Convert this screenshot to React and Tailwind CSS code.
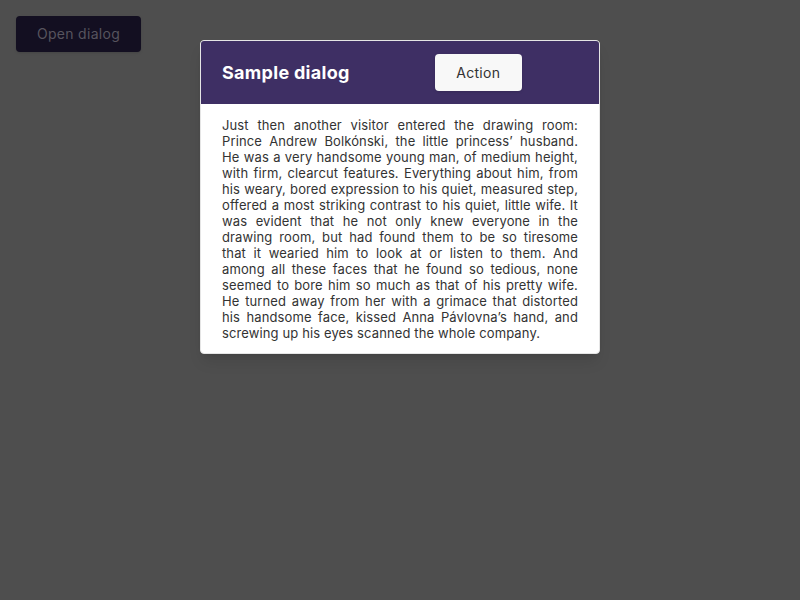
export default function App() {
  return (
    <div className="relative w-[800px] h-[600px] bg-[#4e4e4e] overflow-hidden" style={{ fontFamily: 'Inter, "Noto Sans", sans-serif' }}>
      <div className="p-4">
        <button className="h-9 w-[125px] rounded bg-[#130f21] text-[#57545e] text-sm tracking-[0.3px] shadow">Open dialog</button>
      </div>
      <div className="absolute left-[200px] top-[40px] w-[400px] rounded border border-[#e5e5e5] bg-white overflow-hidden shadow-lg">
        <div className="flex items-center h-[63px] bg-[#3e2f64] px-[21px]">
          <h2 className="text-white font-bold text-lg tracking-[0.3px]">Sample dialog</h2>
          <button className="ml-[85px] h-[37px] w-[87px] rounded bg-[#f8f8f8] text-sm text-[#333] tracking-[0.3px] shadow">Action</button>
        </div>
        <div className="px-[21px] pt-[13px] pb-[12px]">
          <p className="text-[13px] leading-4 text-[#333] text-justify tracking-[0.12px]">
            Just then another visitor entered the drawing room: Prince Andrew Bolkónski, the little princess’ husband. He was a very handsome young man, of medium height, with firm, clearcut features. Everything about him, from his weary, bored expression to his quiet, measured step, offered a most striking contrast to his quiet, little wife. It was evident that he not only knew everyone in the drawing room, but had found them to be so tiresome that it wearied him to look at or listen to them. And among all these faces that he found so tedious, none seemed to bore him so much as that of his pretty wife. He turned away from her with a grimace that distorted his handsome face, kissed Anna Pávlovna’s hand, and screwing up his eyes scanned the whole company.
          </p>
        </div>
      </div>
    </div>
  );
}
